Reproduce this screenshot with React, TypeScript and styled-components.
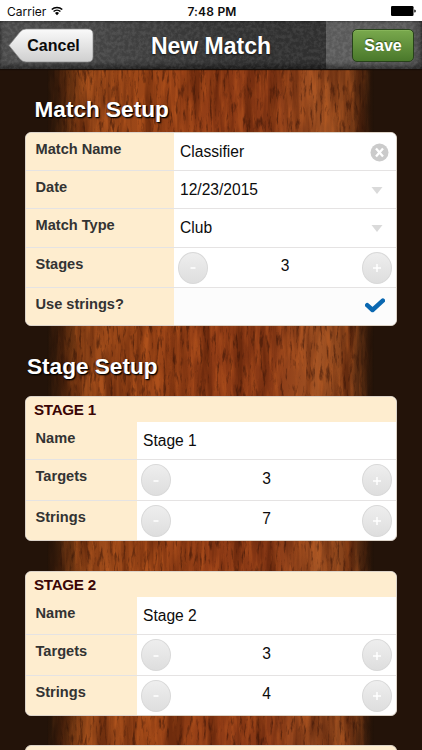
import React from "react";
import styled, { createGlobalStyle } from "styled-components";

const GlobalStyle = createGlobalStyle`
  * { box-sizing: border-box; }
  body { margin: 0; background: #231309; overflow: hidden; }
`;

const Screen = styled.div`
  position: relative;
  isolation: isolate;
  width: 422px;
  height: 750px;
  overflow: hidden;
  display: flex;
  flex-direction: column;
  font-family: "Liberation Sans", Arial, sans-serif;
  color: #0c0c0c;
`;

const WoodSvg = styled.svg`
  position: absolute;
  inset: 0;
  z-index: -1;
`;

const StatusBar = styled.div`
  flex: none;
  height: 21px;
  display: grid;
  grid-template-columns: 1fr auto 1fr;
  align-items: center;
  padding: 1px 6px 0 7px;
  background: #fff;
  font-size: 12px;
`;

const Carrier = styled.div`
  display: flex;
  align-items: center;
  gap: 5px;
  font-family: Inter, "Liberation Sans", sans-serif;
`;

const Clock = styled.div`
  padding-left: 1px;
  font: 600 12px Inter, "Liberation Sans", sans-serif;
  letter-spacing: 0.2px;
`;

const BatterySlot = styled.div`
  display: flex;
  justify-content: flex-end;
`;

const NavBar = styled.header`
  flex: none;
  position: relative;
  height: 48px;
  display: grid;
  grid-template-columns: 93px 1fr 93px;
  align-items: center;
  background: linear-gradient(90deg, #505050 0, #4a4a4a 90px, #363636 230px, #323232 326px, #606060 326px, #5c5c5c 410px, #454545 422px);
  box-shadow: inset 0 1px 2px rgba(0, 0, 0, 0.3), inset 0 -4px 4px rgba(0, 0, 0, 0.45), 0 1px 1px #160c06;
`;

const Leather = styled.svg`
  position: absolute;
  inset: 0;
  opacity: 0.055;
`;

const Title = styled.h1`
  position: relative;
  margin: 2px 0 0;
  text-align: center;
  font-size: 23px;
  line-height: 30px;
  color: #fff;
  text-shadow: 0 1px 2px #111;
`;

const CancelButton = styled.button`
  position: relative;
  width: 86px;
  height: 35px;
  margin-left: 8px;
  padding: 1px 0 0 5px;
  border: 0;
  background: none;
  font: bold 16px "Liberation Sans", Arial, sans-serif;
  color: #0b0b0b;
`;

const ArrowShape = styled.svg`
  position: absolute;
  left: 0;
  top: 0;
  z-index: -1;
`;

const CancelWrap = styled.div`
  position: relative;
  z-index: 0;
`;

const SaveButton = styled.button`
  position: relative;
  justify-self: end;
  width: 62px;
  height: 33px;
  margin-right: 8px;
  padding: 1px 0 0;
  border: 1px solid #27421a;
  border-radius: 5px;
  background: linear-gradient(#79a94d, #4a782b);
  box-shadow: inset 0 1px 0 rgba(170, 210, 120, 0.3);
  font: bold 16px "Liberation Sans", Arial, sans-serif;
  color: #fff;
  text-shadow: 0 -1px 1px #31521c;
`;

const Content = styled.main`
  flex: none;
  display: flex;
  flex-direction: column;
  padding: 27px 25px 0;
`;

const SectionTitle = styled.h2<{ $indent: number; $gap: number }>`
  margin: 0 0 ${(p) => p.$gap}px;
  padding-left: ${(p) => p.$indent}px;
  font-size: 22.6px;
  line-height: 28px;
  color: #fff;
  text-shadow: 1px 1px 2px #000, 1px 1px 1px rgba(0, 0, 0, 0.8);
`;

const Card = styled.section<{ $gap: number }>`
  margin-bottom: ${(p) => p.$gap}px;
  border: 1px solid #dcd3c8;
  border-radius: 6px;
  overflow: hidden;
  background: #fff;
`;

const CardHeader = styled.h3`
  height: 25px;
  margin: 0;
  padding: 0 0 0 8px;
  background: #feedcf;
  font-size: 15.2px;
  line-height: 25px;
  letter-spacing: -0.3px;
  color: #3a0505;
`;

const Row = styled.div<{ $label: number; $height: number; $last?: boolean }>`
  display: grid;
  grid-template-columns: ${(p) => p.$label}px 1fr;
  height: ${(p) => p.$height}px;
  border-bottom: ${(p) => (p.$last ? 0 : 1)}px solid #e5e3e3;
`;

const Label = styled.div`
  padding: 8px 0 0 9.5px;
  background: #feedcf;
  font-size: 14.6px;
  line-height: 17px;
  font-weight: bold;
  color: #333;
`;

const Field = styled.div<{ $tint?: boolean }>`
  display: flex;
  align-items: center;
  justify-content: space-between;
  padding: 0 12px 0 6px;
  font-size: 15.6px;
  background: ${(p) => (p.$tint ? "#fcfcfc" : "#fff")};
`;

const IconSlot = styled.span<{ $shift: number; $lift?: number }>`
  display: flex;
  margin: 1px ${(p) => p.$shift}px ${(p) => p.$lift ?? 0}px auto;
`;

const Stepper = styled.div`
  display: grid;
  grid-template-columns: 30px 1fr 30px;
  align-items: center;
  padding: 0 4px;
`;

const Count = styled.output`
  padding-bottom: 3px;
  text-align: center;
  font-size: 15.6px;
`;

const RoundButton = styled.button`
  display: flex;
  align-items: center;
  justify-content: center;
  width: 30px;
  height: 32px;
  padding: 1px 0 0;
  border: 1px solid #d9d9d9;
  border-radius: 50%;
  background: linear-gradient(#eee, #dedede);
  color: #fff;
`;

const CardPeek = styled.div`
  height: 30px;
  border: 1px solid #dcd3c8;
  border-radius: 6px 6px 0 0;
  background: #feedcf;
`;

function Wood() {
  return (
    <WoodSvg width="422" height="750" aria-hidden="true">
      <defs>
        <linearGradient id="base">
          <stop offset="0" stopColor="#3a1d0b" />
          <stop offset="0.06" stopColor="#6e3410" />
          <stop offset="0.14" stopColor="#9a4a1a" />
          <stop offset="0.3" stopColor="#9c4617" />
          <stop offset="0.5" stopColor="#923d16" />
          <stop offset="0.68" stopColor="#873815" />
          <stop offset="0.83" stopColor="#a45424" />
          <stop offset="0.93" stopColor="#7f3e18" />
          <stop offset="1" stopColor="#3a1c0b" />
        </linearGradient>
        <linearGradient id="edges">
          <stop offset="0" stopColor="#211208" stopOpacity="0.9" />
          <stop offset="0.05" stopColor="#211208" stopOpacity="0.4" />
          <stop offset="0.1" stopColor="#211208" stopOpacity="0" />
          <stop offset="0.92" stopColor="#211208" stopOpacity="0" />
          <stop offset="0.97" stopColor="#211208" stopOpacity="0.4" />
          <stop offset="1" stopColor="#211208" />
        </linearGradient>
        <filter id="grain" x="0" y="0" width="1" height="1" colorInterpolationFilters="sRGB">
          <feTurbulence type="fractalNoise" baseFrequency="0.09 0.009" numOctaves="5" seed="8" />
          <feColorMatrix values="0 0 0 0 0.28  0 0 0 0 0.09  0 0 0 0 0.02  3 0 0 0 -1.25" />
        </filter>
        <filter id="glow" x="0" y="0" width="1" height="1" colorInterpolationFilters="sRGB">
          <feTurbulence type="fractalNoise" baseFrequency="0.2 0.03" numOctaves="4" seed="23" />
          <feColorMatrix values="0 0 0 0 0.82  0 0 0 0 0.4  0 0 0 0 0.14  2.6 0 0 0 -1.1" />
        </filter>
        <filter id="pores" x="0" y="0" width="1" height="1" colorInterpolationFilters="sRGB">
          <feTurbulence type="fractalNoise" baseFrequency="0.3 0.06" numOctaves="4" seed="4" />
          <feColorMatrix values="0 0 0 0 0.18  0 0 0 0 0.06  0 0 0 0 0.02  4 0 0 0 -2.2" />
        </filter>
      </defs>
      <rect width="422" height="750" fill="#231309" />
      <rect x="48" y="69" width="325" height="681" fill="url(#base)" />
      <rect x="48" y="69" width="325" height="681" filter="url(#glow)" opacity="0.35" />
      <rect x="48" y="69" width="325" height="681" filter="url(#grain)" opacity="0.5" />
      <rect x="48" y="69" width="325" height="681" filter="url(#pores)" opacity="0.5" />
      <rect x="47" y="69" width="327" height="681" fill="url(#edges)" />
    </WoodSvg>
  );
}

function Sign({ plus }: { plus?: boolean }) {
  return (
    <svg width="10" height="10" viewBox="0 0 10 10" stroke="currentColor" strokeWidth="1.5">
      <path d={plus ? "M1 5h8M5 1v8" : "M2.5 5h5"} />
    </svg>
  );
}

function StepperField({ value, name }: { value: number; name: string }) {
  return (
    <Stepper>
      <RoundButton aria-label={`Fewer ${name}`}><Sign /></RoundButton>
      <Count>{value}</Count>
      <RoundButton aria-label={`More ${name}`}><Sign plus /></RoundButton>
    </Stepper>
  );
}

function Caret() {
  return (
    <IconSlot $shift={1}>
      <svg width="12" height="7" viewBox="0 0 12 7"><path d="M.5 0h11L6 7z" fill="#dadada" /></svg>
    </IconSlot>
  );
}

function StageCard({ number, strings }: { number: number; strings: number }) {
  return (
    <Card $gap={number === 2 ? 29 : 30}>
      <CardHeader>STAGE {number}</CardHeader>
      <Row $label={111} $height={38}><Label>Name</Label><Field>Stage {number}</Field></Row>
      <Row $label={111} $height={41}><Label>Targets</Label><StepperField name="targets" value={3} /></Row>
      <Row $label={111} $height={39} $last><Label>Strings</Label><StepperField name="strings" value={strings} /></Row>
    </Card>
  );
}

export default function App() {
  return (
    <>
      <GlobalStyle />
      <Screen>
        <Wood />
        <StatusBar>
          <Carrier>
            Carrier
            <svg width="12" height="10" viewBox="0 0 13 10" fill="none" stroke="#000" strokeWidth="1.6">
              <path d="M.8 3.4a8.2 8.2 0 0 1 11.4 0M2.8 5.6a5.3 5.3 0 0 1 7.4 0" />
              <path d="M4.3 7.2a3.2 3.2 0 0 1 4.4 0L6.5 9.6z" fill="#000" stroke="none" />
            </svg>
          </Carrier>
          <Clock>7:48 PM</Clock>
          <BatterySlot>
            <svg width="25" height="10" viewBox="0 0 25 10">
              <rect width="22.5" height="10" rx="1.3" />
              <path d="M23.3 3.4q1.5 0 1.5 1.6t-1.5 1.6z" />
            </svg>
          </BatterySlot>
        </StatusBar>
        <NavBar>
          <Leather width="422" height="48" aria-hidden="true">
            <filter id="leather" x="0" y="0" width="1" height="1" colorInterpolationFilters="sRGB">
              <feTurbulence type="fractalNoise" baseFrequency="0.28" numOctaves="3" seed="2" />
              <feColorMatrix values="3 0 0 0 -1.1  3 0 0 0 -1.1  3 0 0 0 -1.1  0 0 0 0 1" />
            </filter>
            <rect width="422" height="48" filter="url(#leather)" />
          </Leather>
          <CancelWrap>
            <CancelButton>
              <ArrowShape width="86" height="35" viewBox="0 0 86 35">
                <defs>
                  <linearGradient id="silver" x2="0" y2="1">
                    <stop stopColor="#fafafa" />
                    <stop offset="1" stopColor="#cfcfcf" />
                  </linearGradient>
                </defs>
                <path d="M1 17.5 12 4Q14.500 1 18 1H79.500Q85 1 85 6V29Q85 34 79.500 34H18Q14.500 34 12 31Z" fill="url(#silver)" stroke="#8b8b8b" strokeWidth="0.7" />
              </ArrowShape>
              Cancel
            </CancelButton>
          </CancelWrap>
          <Title>New Match</Title>
          <SaveButton>Save</SaveButton>
        </NavBar>
        <Content>
          <SectionTitle $indent={9.5} $gap={8}>Match Setup</SectionTitle>
          <Card $gap={27}>
            <Row $label={148} $height={38}>
              <Label>Match Name</Label>
              <Field>
                Classifier
                <IconSlot $shift={-5}>
                  <svg width="19" height="19" viewBox="0 0 19 19">
                    <circle cx="9.500" cy="9.500" r="9" fill="#cbcbcb" />
                    <path d="m6 5.500 7 8m0-8-7 8" stroke="#fff" strokeWidth="2.300" />
                  </svg>
                </IconSlot>
              </Field>
            </Row>
            <Row $label={148} $height={38}><Label>Date</Label><Field>12/23/2015<Caret /></Field></Row>
            <Row $label={148} $height={39}><Label>Match Type</Label><Field>Club<Caret /></Field></Row>
            <Row $label={148} $height={40}><Label>Stages</Label><StepperField name="stages" value={3} /></Row>
            <Row $label={148} $height={37} $last>
              <Label>Use strings?</Label>
              <Field $tint>
                <IconSlot $shift={-1} $lift={4}>
                  <svg width="20" height="15" viewBox="0 0 20 15" fill="none" stroke="#0b68b1" strokeWidth="4.500">
                    <path d="m2.200 7.200 5.300 4.800L17.800 2.600" strokeLinejoin="round" strokeLinecap="round" />
                  </svg>
                </IconSlot>
              </Field>
            </Row>
          </Card>
          <SectionTitle $indent={2} $gap={15}>Stage Setup</SectionTitle>
          <StageCard number={1} strings={7} />
          <StageCard number={2} strings={4} />
          <CardPeek />
        </Content>
      </Screen>
    </>
  );
}
